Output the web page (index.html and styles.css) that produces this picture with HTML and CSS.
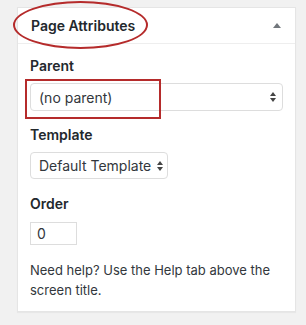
FILE: index.html
```html
<!DOCTYPE html>
<html lang="en">
<head>
    <meta charset="UTF-8">
    <meta name="viewport" content="width=device-width, initial-scale=1.0">
    <title>Page Attributes</title>
    <link rel="stylesheet" href="styles.css">
</head>
<body>
    <!-- Page Attributes box -->
    <div class="postbox">
        <div class="postbox-header">
            <h2 class="postbox-title">Page Attributes</h2>
            <span class="toggle-arrow"></span>
        </div>
        <div class="inside">
            <p class="field-label first">Parent</p>
            <div class="select select-wide">
                <span>(no parent)</span>
                <span class="select-arrows"></span>
            </div>

            <p class="field-label">Template</p>
            <div class="select select-narrow">
                <span>Default Template</span>
                <span class="select-arrows"></span>
            </div>

            <p class="field-label order-label">Order</p>
            <div class="order-input">0</div>

            <p class="help-text">Need help? Use the Help tab above the screen title.</p>
        </div>
    </div>

    <!-- annotations drawn over the screenshot -->
    <div class="mark-ellipse"></div>
    <div class="mark-box"></div>
</body>
</html>
```

FILE: styles.css
```css
body {
    margin: 0;
    background-color: #f1f1f1;
    font-family: Inter, "Liberation Sans", Arial, sans-serif;
    color: #23282d;
    position: relative;
    height: 325px;
    overflow: hidden;
}
.postbox {
    margin: 7px 0 0 17px;
    width: 277px;
    height: 303px;
    background-color: #fff;
    border: 1px solid #e5e5e5;
    box-shadow: 0 1px 1px rgba(0, 0, 0, 0.04);
}
.postbox-header {
    display: flex;
    align-items: center;
    justify-content: space-between;
    height: 35px;
    padding: 0 14px 0 13px;
    border-bottom: 1px solid #eee;
}
.postbox-title {
    margin: 0;
    font-size: 14px;
    font-weight: 600;
    color: #23282d;
}
.toggle-arrow {
    width: 0;
    height: 0;
    border-left: 4px solid transparent;
    border-right: 4px solid transparent;
    border-bottom: 5px solid #72777c;
}
.inside {
    padding: 0 12px;
}
.field-label {
    margin: 17px 0 10px;
    font-size: 14px;
    font-weight: 600;
    line-height: 14px;
}
.field-label.first {
    margin-top: 15px;
}
.field-label.order-label {
    margin-top: 18px;
    margin-bottom: 11px;
}
.select {
    display: flex;
    align-items: center;
    justify-content: space-between;
    box-sizing: border-box;
    height: 28px;
    padding: 0 6px 0 8px;
    border: 1px solid #ddd;
    border-radius: 4px;
    font-size: 14px;
    color: #32373c;
}
.select-wide {
    width: 253px;
}
.select-narrow {
    width: 138px;
    height: 27px;
    padding-left: 8px;
    padding-right: 4px;
}
.select-arrows {
    display: flex;
    flex-direction: column;
    gap: 2px;
}
.select-arrows::before,
.select-arrows::after {
    content: "";
    width: 0;
    height: 0;
    border-left: 3.5px solid transparent;
    border-right: 3.5px solid transparent;
}
.select-arrows::before {
    border-bottom: 4px solid #444;
}
.select-arrows::after {
    border-top: 4px solid #444;
}
.order-input {
    box-sizing: border-box;
    width: 47px;
    height: 23px;
    padding: 2px 6px;
    border: 1px solid #ddd;
    font-size: 14px;
    color: #32373c;
}
.help-text {
    margin: 15px 0 0;
    font-size: 13px;
    line-height: 20px;
    color: #32373c;
}
.mark-ellipse {
    position: absolute;
    left: 13px;
    top: 1px;
    width: 131px;
    height: 44px;
    border: 2px solid #b52b2b;
    border-radius: 50%;
}
.mark-box {
    position: absolute;
    left: 25px;
    top: 79px;
    width: 132px;
    height: 36px;
    border: 2px solid #b52b2b;
}
```
